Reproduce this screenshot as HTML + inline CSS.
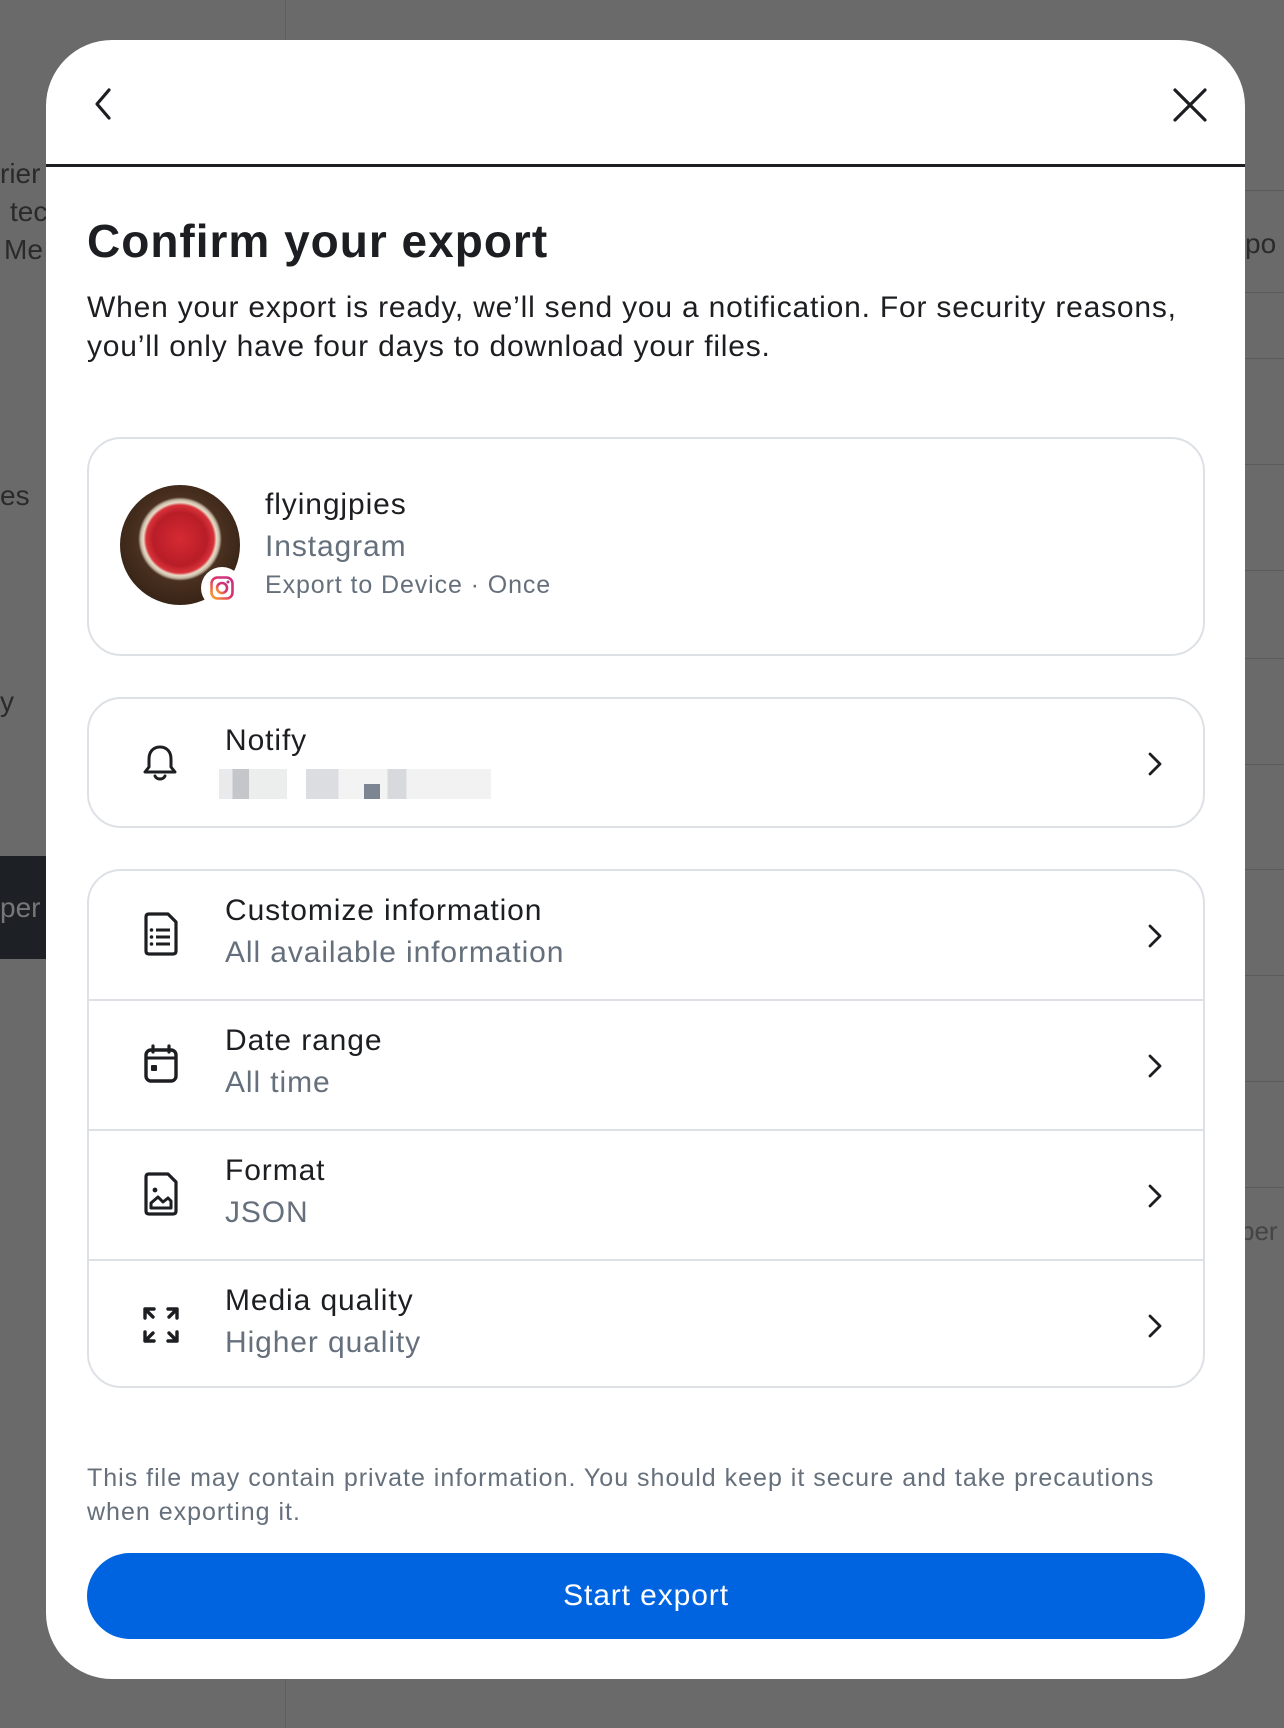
<!DOCTYPE html>
<html><head><meta charset="utf-8"><style>
*{margin:0;padding:0;box-sizing:border-box}
body{width:1284px;height:1728px;background:#6a6a6a;position:relative;overflow:hidden;font-family:"Liberation Sans",sans-serif;color:#1c1e21}
.a{position:absolute}
.bgt{color:#2a2a2a;font-size:28px}
.hl{position:absolute;left:1230px;width:60px;height:1px;background:#5a5a5a}
.modal{position:absolute;left:46px;top:40px;width:1199px;height:1639px;background:#fff;border-radius:66px;overflow:hidden}
.card{position:absolute;left:41px;width:1118px;border:2px solid #dde1e5;border-radius:34px;background:#fff}
.t1{font-size:30px;color:#1c1e21;position:absolute;letter-spacing:0.9px}
.t2{font-size:30px;color:#65707c;position:absolute;letter-spacing:0.9px}
.chev{position:absolute;left:1056px}
.div{position:absolute;left:0;right:0;height:2px;background:#dde1e5}
</style></head><body>
<div class="a" style="left:285px;top:0;width:1px;height:1728px;background:#5e5e5e"></div>
<div class="a bgt" style="left:0;top:158px">rier</div>
<div class="a bgt" style="left:10px;top:196px">tec</div>
<div class="a bgt" style="left:4px;top:234px">Me</div>
<div class="a bgt" style="left:0;top:480px">es</div>
<div class="a bgt" style="left:0;top:686px">y</div>
<div class="a" style="left:0;top:856px;width:60px;height:103px;background:#1d2024"></div>
<div class="a" style="left:0;top:892px;color:#777;font-size:28px">per</div>
<div class="hl" style="top:190px"></div><div class="hl" style="top:292px"></div><div class="hl" style="top:358px"></div><div class="hl" style="top:464px"></div><div class="hl" style="top:570px"></div><div class="hl" style="top:658px"></div><div class="hl" style="top:764px"></div><div class="hl" style="top:869px"></div><div class="hl" style="top:975px"></div><div class="hl" style="top:1081px"></div><div class="hl" style="top:1187px"></div>
<div class="a bgt" style="left:1245px;top:228px">po</div>
<div class="a" style="left:1240px;top:1216px;color:#444;font-size:26px">per</div>

<div class="modal">
 <svg class="a" style="left:42px;top:44px" width="30" height="40" viewBox="0 0 30 40"><path d="M21 6 L9 20 L21 34" fill="none" stroke="#1c1e21" stroke-width="3.2" stroke-linecap="round" stroke-linejoin="round"/></svg>
 <svg class="a" style="left:1126px;top:47px" width="36" height="36" viewBox="0 0 36 36"><path d="M3 3 L33 33 M33 3 L3 33" fill="none" stroke="#1c1e21" stroke-width="3.2" stroke-linecap="round"/></svg>
 <div class="a" style="left:0;top:124px;width:1199px;height:3px;background:#1c1e21"></div>
 <div class="a" style="left:41px;top:174px;font-size:46px;font-weight:bold;letter-spacing:1px">Confirm your export</div>
 <div class="a" style="left:41px;top:248px;font-size:30px;line-height:39px;width:1140px;letter-spacing:0.8px">When your export is ready, we’ll send you a notification. For security reasons, you’ll only have four days to download your files.</div>

 <div class="card" style="top:397px;height:219px">
  <div class="a" style="left:31px;top:46px;width:120px;height:120px;border-radius:50%;background:radial-gradient(circle at 50% 45%,#d62a33 0,#b81d27 30%,#d8323a 38%,#e8dcc8 41%,#c4b8a4 44%,#4a3020 47%,#3a2618 70%)"></div>
  <div class="a" style="left:112px;top:128px;width:42px;height:42px;border-radius:50%;background:#fff"></div>
  <svg class="a" style="left:120px;top:136px" width="26" height="26" viewBox="0 0 26 26"><defs><linearGradient id="ig" x1="0" y1="1" x2="1" y2="0"><stop offset="0" stop-color="#f9a826"/><stop offset=".5" stop-color="#e1306c"/><stop offset="1" stop-color="#c13584"/></linearGradient></defs><rect x="2.5" y="2.5" width="21" height="21" rx="6" fill="none" stroke="url(#ig)" stroke-width="2.6"/><circle cx="13" cy="13" r="5" fill="none" stroke="url(#ig)" stroke-width="2.6"/><circle cx="19" cy="7" r="1.5" fill="#c13584"/></svg>
  <div class="t1" style="left:176px;top:49px">flyingjpies</div>
  <div class="t2" style="left:176px;top:91px">Instagram</div>
  <div class="a" style="left:176px;top:132px;font-size:25px;color:#65707c;letter-spacing:0.9px">Export to Device · Once</div>
 </div>

 <div class="card" style="top:657px;height:131px">
  <svg class="a" style="left:52px;top:44px" width="38" height="40" viewBox="0 0 38 40"><path d="M19 4 C12 4 8 9 8 16 L8 24 L4 29 L34 29 L30 24 L30 16 C30 9 26 4 19 4 Z M14 33 C16 37 22 37 24 33" fill="none" stroke="#1c1e21" stroke-width="3" stroke-linejoin="round" stroke-linecap="round"/></svg>
  <div class="t1" style="left:136px;top:25px">Notify</div>
  <div class="a" style="left:130px;top:70px;width:272px;height:30px;background:linear-gradient(90deg,#eaeaec 0,#eaeaec 5%,#c4c6ca 5%,#c4c6ca 11%,#eceded 11%,#eceded 25%,#fff 25%,#fff 32%,#dcdde0 32%,#dcdde0 44%,#f3f3f4 44%,#f3f3f4 62%,#d8d9dc 62%,#d8d9dc 69%,#f2f2f3 69%,#f2f2f3 100%)"></div>
  <div class="a" style="left:275px;top:85px;width:16px;height:15px;background:#7c8592"></div>
  <svg class="chev" style="top:52px" width="20" height="26" viewBox="0 0 20 26"><path d="M5 3 L15 13 L5 23" fill="none" stroke="#1c1e21" stroke-width="2.8" stroke-linecap="round" stroke-linejoin="round"/></svg>
 </div>

 <div class="card" style="top:829px;height:519px;overflow:hidden">
  <div class="div" style="top:128px"></div><div class="div" style="top:258px"></div><div class="div" style="top:388px"></div>
  <svg class="a" style="left:52px;top:40px" width="40" height="46" viewBox="0 0 40 46"><path d="M5 6 Q5 3 8 3 L27 3 L35 11 L35 40 Q35 43 32 43 L8 43 Q5 43 5 40 Z" fill="none" stroke="#1c1e21" stroke-width="3.2" stroke-linejoin="round"/><path d="M15 19 H29 M15 26 H29 M15 33 H29" stroke="#1c1e21" stroke-width="3"/><circle cx="10.5" cy="19" r="1.8" fill="#1c1e21"/><circle cx="10.5" cy="26" r="1.8" fill="#1c1e21"/><circle cx="10.5" cy="33" r="1.8" fill="#1c1e21"/></svg>
  <div class="t1" style="left:136px;top:23px">Customize information</div>
  <div class="t2" style="left:136px;top:65px">All available information</div>
  <svg class="chev" style="top:52px" width="20" height="26" viewBox="0 0 20 26"><path d="M5 3 L15 13 L5 23" fill="none" stroke="#1c1e21" stroke-width="2.8" stroke-linecap="round" stroke-linejoin="round"/></svg>
  <svg class="a" style="left:52px;top:172px" width="40" height="42" viewBox="0 0 40 42"><rect x="5" y="7" width="30" height="31" rx="5" fill="none" stroke="#1c1e21" stroke-width="3.4"/><path d="M5 15 H35" stroke="#1c1e21" stroke-width="3"/><path d="M12 3 V9 M28 3 V9" stroke="#1c1e21" stroke-width="3.2" stroke-linecap="round"/><rect x="10" y="22" width="6" height="6" rx="1" fill="#1c1e21"/></svg>
  <div class="t1" style="left:136px;top:153px">Date range</div>
  <div class="t2" style="left:136px;top:195px">All time</div>
  <svg class="chev" style="top:182px" width="20" height="26" viewBox="0 0 20 26"><path d="M5 3 L15 13 L5 23" fill="none" stroke="#1c1e21" stroke-width="2.8" stroke-linecap="round" stroke-linejoin="round"/></svg>
  <svg class="a" style="left:52px;top:300px" width="40" height="46" viewBox="0 0 40 46"><path d="M5 6 Q5 3 8 3 L27 3 L35 11 L35 40 Q35 43 32 43 L8 43 Q5 43 5 40 Z" fill="none" stroke="#1c1e21" stroke-width="3.2" stroke-linejoin="round"/><circle cx="14" cy="19" r="2.4" fill="#1c1e21"/><path d="M10 37 L10 32 L17 26 L22 31 L27 27 L30 30 L30 37 Z" fill="none" stroke="#1c1e21" stroke-width="3" stroke-linejoin="round"/></svg>
  <div class="t1" style="left:136px;top:283px">Format</div>
  <div class="t2" style="left:136px;top:325px">JSON</div>
  <svg class="chev" style="top:312px" width="20" height="26" viewBox="0 0 20 26"><path d="M5 3 L15 13 L5 23" fill="none" stroke="#1c1e21" stroke-width="2.8" stroke-linecap="round" stroke-linejoin="round"/></svg>
  <svg class="a" style="left:52px;top:434px" width="40" height="40" viewBox="0 0 40 40"><g fill="none" stroke="#1c1e21" stroke-width="3.4" stroke-linecap="round" stroke-linejoin="round"><path d="M4 13 V4 H13 M4 4 L12 12"/><path d="M36 13 V4 H27 M36 4 L28 12"/><path d="M4 27 V36 H13 M4 36 L12 28"/><path d="M36 27 V36 H27 M36 36 L28 28"/></g></svg>
  <div class="t1" style="left:136px;top:413px">Media quality</div>
  <div class="t2" style="left:136px;top:455px">Higher quality</div>
  <svg class="chev" style="top:442px" width="20" height="26" viewBox="0 0 20 26"><path d="M5 3 L15 13 L5 23" fill="none" stroke="#1c1e21" stroke-width="2.8" stroke-linecap="round" stroke-linejoin="round"/></svg>
 </div>

 <div class="a" style="left:41px;top:1421px;width:1100px;font-size:25px;line-height:34px;color:#65707c;letter-spacing:1px">This file may contain private information. You should keep it secure and take precautions when exporting it.</div>
 <div class="a" style="left:41px;top:1513px;width:1118px;height:86px;border-radius:43px;background:#0064e0;color:#fff;font-size:30px;text-align:center;line-height:86px;letter-spacing:0.9px">Start export</div>
</div>
</body></html>
